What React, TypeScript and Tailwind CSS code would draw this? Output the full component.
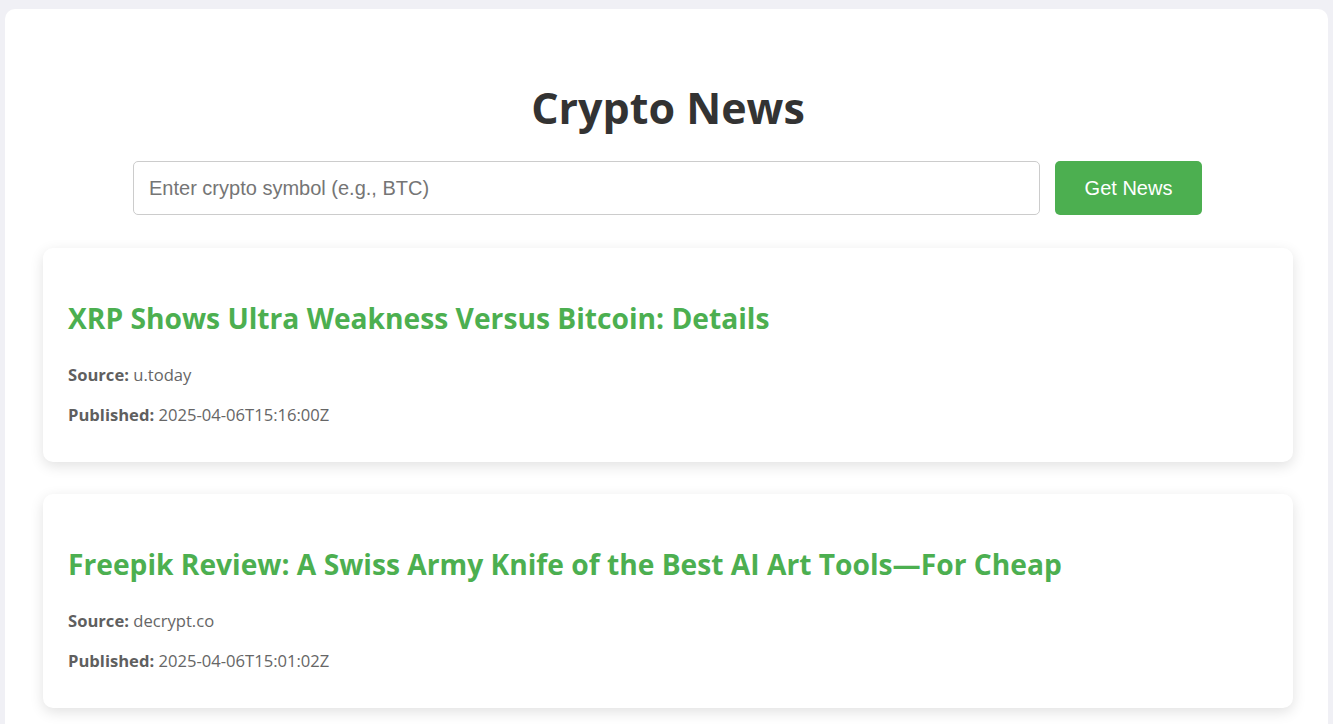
import { useState } from "react"

type Article = {
  title: string
  source: string
  published: string
}

const articles: Article[] = [
  {
    title: "XRP Shows Ultra Weakness Versus Bitcoin: Details",
    source: "u.today",
    published: "2025-04-06T15:16:00Z",
  },
  {
    title: "Freepik Review: A Swiss Army Knife of the Best AI Art Tools—For Cheap",
    source: "decrypt.co",
    published: "2025-04-06T15:01:02Z",
  },
]

function NewsCard({ article }: { article: Article }) {
  return (
    <div className="rounded-[10px] bg-white px-[25px] pt-[53px] pb-[37px] shadow-[0_4px_14px_rgba(0,0,0,0.12)]">
      <h2 className="text-[28.2px] leading-[34px] font-bold text-[#4caf50]">{article.title}</h2>
      <p className="mt-[30px] text-[16.6px] leading-[20px] text-[#666]">
        <strong className="font-bold text-[#5f5f5f]">Source:</strong> {article.source}
      </p>
      <p className="mt-[20px] text-[16.6px] leading-[20px] text-[#666]">
        <strong className="font-bold text-[#5f5f5f]">Published:</strong> {article.published}
      </p>
    </div>
  )
}

export default function App() {
  const [symbol, setSymbol] = useState("")

  return (
    <div className="min-h-screen bg-[#f0f0f5] px-[5px] pt-[9px] font-['Open_Sans',sans-serif]">
      <div className="rounded-t-[10px] bg-white pt-[71px] pb-[20px] pl-[38px] pr-[35px]">
        <h1 className="text-center text-[43px] leading-[56px] font-bold text-[#333]">Crypto News</h1>

        <div className="mt-[25px] flex justify-center gap-[15px] pr-[1px]">
          <input
            value={symbol}
            onChange={(e) => setSymbol(e.target.value)}
            placeholder="Enter crypto symbol (e.g., BTC)"
            className="h-[54px] w-[907px] rounded-[5px] border border-[#ccc] px-[15px] font-['Liberation_Sans',sans-serif] text-[20px] text-[#333] placeholder:text-[#757575] outline-none"
          />
          <button className="h-[54px] w-[147px] rounded-[5px] bg-[#4caf50] font-['Liberation_Sans',sans-serif] text-[20px] text-white">
            Get News
          </button>
        </div>

        <div className="mt-[33px] flex flex-col gap-[32px]">
          {articles.map((a) => (
            <NewsCard key={a.title} article={a} />
          ))}
        </div>
      </div>
    </div>
  )
}
